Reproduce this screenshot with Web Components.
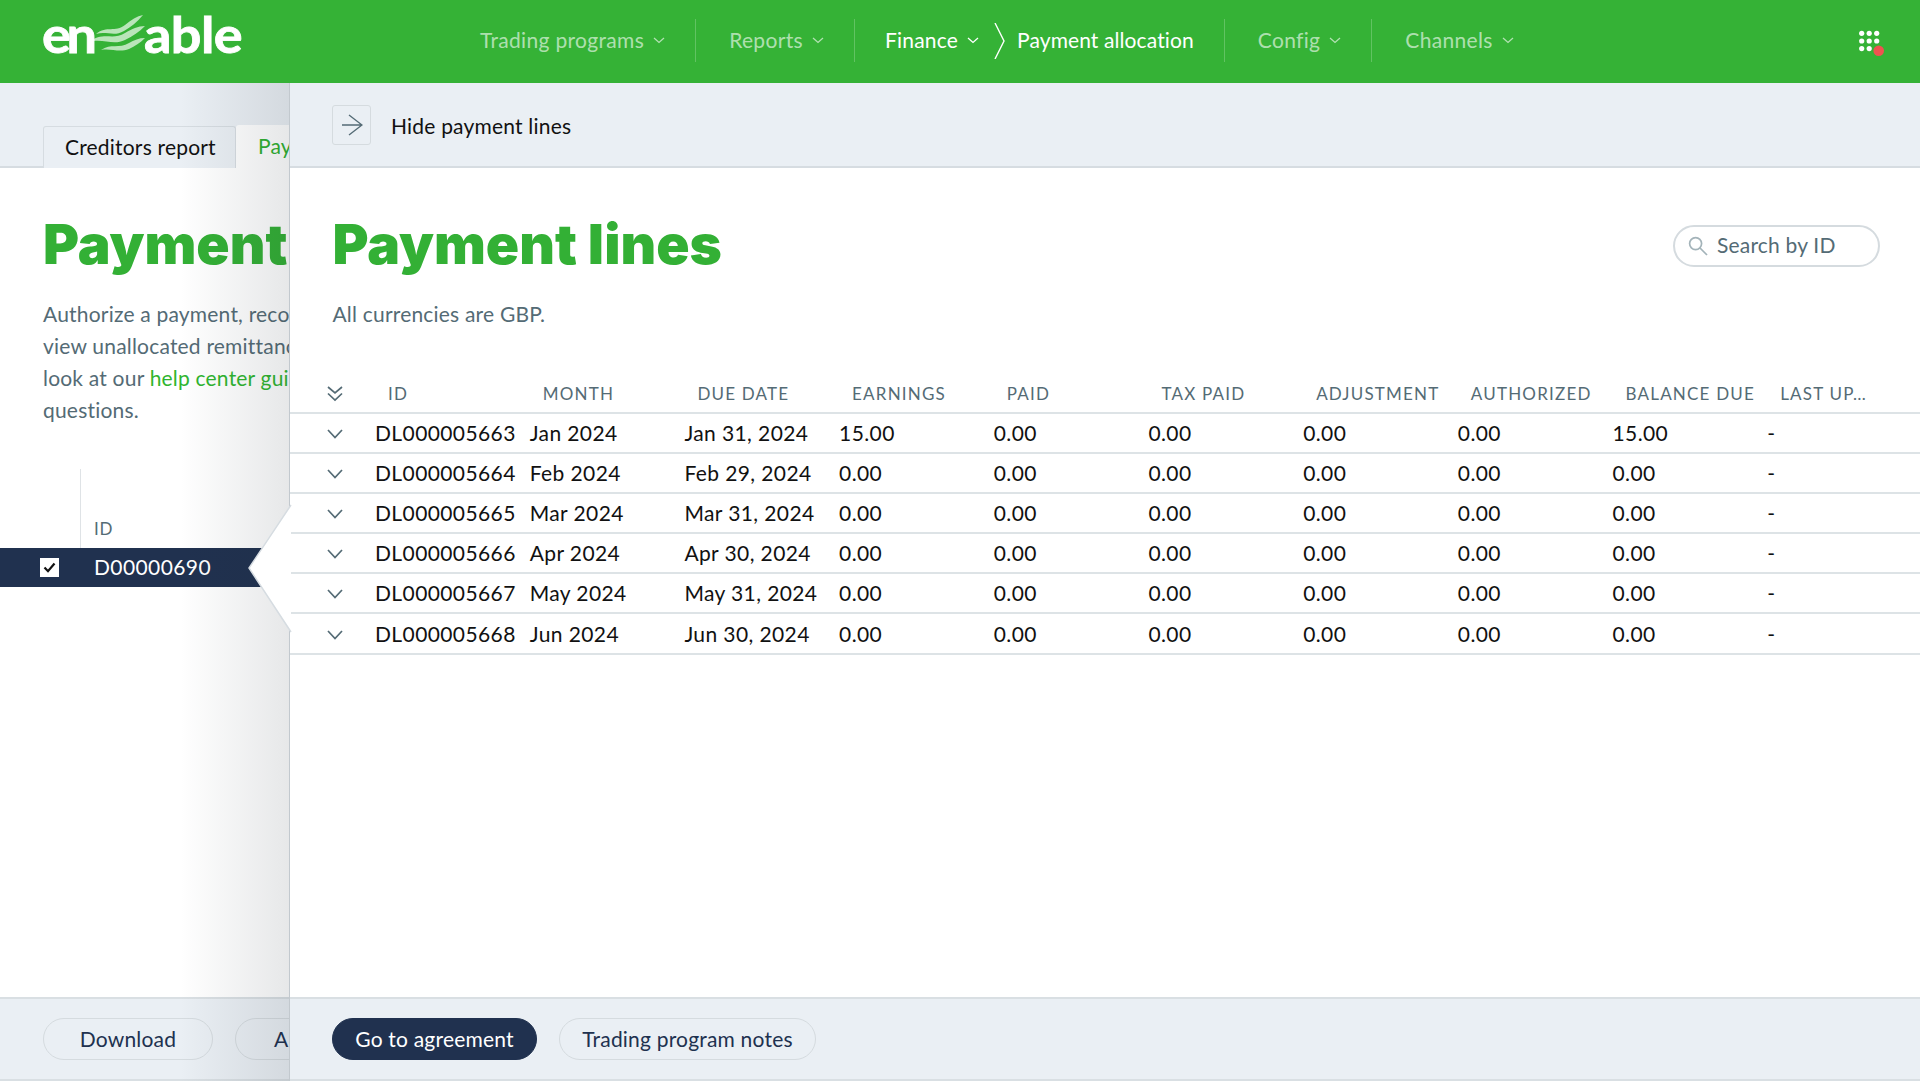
<!DOCTYPE html>
<html lang="en"><head><meta charset="utf-8"><title>Payment lines</title>
<style>
html,body{margin:0;padding:0;background:#fff}
body{font-family:Lato,"Liberation Sans",sans-serif;font-size:21px;letter-spacing:.2px;color:#111}
</style></head><body>
<en-app>
  <en-header slot="header"></en-header>
  <en-page></en-page>
  <en-panel></en-panel>
</en-app>
<script>
const define=(name,css,html)=>{
  customElements.define(name,class extends HTMLElement{
    connectedCallback(){
      if(this.shadowRoot)return;
      const r=this.attachShadow({mode:'open'});
      const h=typeof html==='function'?html(this):html;
      r.innerHTML=`<style>${css}</style>${h}`;
    }
  });
};
const chev=(w,h,c,sw)=>`<svg width="${w}" height="${h}" viewBox="0 0 ${w} ${h}" fill="none" stroke="${c}" stroke-width="${sw}"><path d="M1 1 L${w/2} ${h-1.5} L${w-1} 1"/></svg>`;

define('en-app',`:host{display:block;position:relative;width:1920px;height:1082px;overflow:hidden;background:#fff}
.wrap{display:flex;flex-direction:column;height:1081px}
.main{flex:1;position:relative;min-height:0;display:flex}
`,`<div class="wrap"><slot name="header"></slot><div class="main"><slot></slot></div></div>`);

define('en-logo',`:host{display:flex;align-items:flex-end;height:37px;margin-top:-14px;color:#fff;font:700 50px/37px Lato,sans-serif;position:relative;width:198px;-webkit-text-stroke:.8px #fff;flex:none}
.t{display:block;line-height:37px;height:37px;letter-spacing:-.5px;transform:scaleX(1.08);transform-origin:0 50%}
.en{width:45px;letter-spacing:-4px;margin-left:-1px}
svg{position:absolute;left:44px;top:-5px}
.able{margin-left:57px}`,
`<span class="t en">en</span><svg width="60" height="42" viewBox="0 0 60 42" fill="#fff" fill-opacity=".66"><path d="M9 23C20 14 28 22 38 14C44 9 50 5 56 4C50 11 44 16 37 20C27 26 20 20 9 23Z"/><path d="M2 31C16 20 26 30 38 22C45 18 51 15 58 15C52 21 46 25 38 29C26 35 16 27 2 31Z"/><path d="M14 39C24 32 32 38 42 32C47 29 52 27 58 27C53 32 48 35 42 38C32 42 24 37 14 39Z"/></svg><span class="t able">able</span>`);

define('en-nav-item',`:host{display:flex;align-items:center;height:43px;padding:0 30px 0 33px;border-right:1px solid rgba(255,255,255,.22);color:rgba(255,255,255,.62);font-size:21px;letter-spacing:.33px;white-space:nowrap}
:host([last]){border-right:0}
:host([active]){color:#fff;padding-left:30px;letter-spacing:.2px}
span,b{margin-top:-3px}
svg{margin-left:9px;margin-top:-1px}
svg.sep{margin:0 12px 0 15px}
b{font-weight:400;color:#fff;letter-spacing:.1px}`,
el=>`<span>${el.getAttribute('label')}</span>${el.hasAttribute('nochev')?'':chev(12,7,'currentColor',1.3)}${el.hasAttribute('crumb')?`<svg class="sep" width="11" height="36" viewBox="0 0 11 36" fill="none" stroke="#fff" stroke-width="1.4"><path d="M1 0L10 18L1 36"/></svg><b>${el.getAttribute('crumb')}</b>`:''}`);

define('en-header',`:host{display:flex;align-items:center;height:83px;background:#35b236;padding:0 30px 0 43px;box-sizing:border-box;flex:none}
nav{display:flex;align-items:center;margin:0 0 2px 206px;flex:1}
.apps{position:relative;width:36px;height:36px;flex:none}
svg{display:block}`,
`<en-logo></en-logo><nav>
<en-nav-item label="Trading programs"></en-nav-item>
<en-nav-item label="Reports"></en-nav-item>
<en-nav-item label="Finance" active crumb="Payment allocation"></en-nav-item>
<en-nav-item label="Config"></en-nav-item>
<en-nav-item label="Channels" last></en-nav-item>
</nav><div class="apps"><svg width="36" height="36" viewBox="0 0 36 36" fill="#fff"><circle cx="7.7" cy="9.3" r="2.6"/><circle cx="15.2" cy="9.3" r="2.6"/><circle cx="22.7" cy="9.3" r="2.6"/><circle cx="7.7" cy="17" r="2.6"/><circle cx="15.2" cy="17" r="2.6"/><circle cx="22.7" cy="17" r="2.6"/><circle cx="7.7" cy="24.6" r="2.6"/><circle cx="15.2" cy="24.6" r="2.6"/><circle cx="24.7" cy="26.7" r="5.3" fill="#ef5350"/></svg></div>`);

define('en-bar',`:host{display:flex;box-sizing:border-box;flex:none;background:#eaeff4;padding-left:43px}
:host([kind=top]){height:85px;border-bottom:2px solid #d6dce1;align-items:flex-end}
:host([kind=foot]){height:84px;border-top:2px solid #d9dfe3;border-bottom:2px solid #d9dfe3;align-items:center;gap:22px}
:host([kind=head]){height:85px;border-bottom:2px solid #d6dce1;align-items:center;padding-left:42px}
::slotted(*){flex:none}`,`<slot></slot>`);

define('en-tab',`:host{display:block;box-sizing:border-box;width:193px;height:42px;padding:0 0 0 21px;line-height:40px;font-size:21px;white-space:nowrap;margin-bottom:-2px;color:#111;background:#eaeff4;border:1.5px solid #d6dce1;border-bottom:0;border-radius:3px 3px 0 0}
:host([active]){color:#2fb031;background:#fff;border:0;height:43px;line-height:42px;width:auto;padding:0 22px}`,`<slot></slot>`);

define('en-button',`:host{display:inline-flex;align-items:center;justify-content:center;box-sizing:border-box;height:42px;border:1.5px solid #d5dbdf;border-radius:21px;color:#20314f;font-size:21px;white-space:nowrap;padding:0 0 2px}
:host([primary]){background:#20314f;border-color:#20314f;color:#fff}
:host([start]){justify-content:flex-start;padding-left:38px}`,`<slot></slot>`);

define('en-title',`:host{display:block;font:900 55px/66px Inter,Roboto,Lato,sans-serif;letter-spacing:0;color:#33b035;white-space:nowrap;height:66px;margin:-4px 0 4px}`,`<slot></slot>`);
define('en-text',`:host{display:block;font-size:21px;line-height:32px;color:#546b75;white-space:nowrap}
::slotted(a){color:#2fb52f;text-decoration:none}`,`<slot></slot>`);

define('en-check',`:host{display:block;width:19px;height:19px;background:#fff;flex:none}svg{display:block}`,
`<svg width="19" height="19" viewBox="0 0 19 19" fill="none" stroke="#111" stroke-width="2.2"><path d="M4.5 9.5L8 13.2L14.5 5.5"/></svg>`);

define('en-page',`:host{display:flex;flex-direction:column;width:100%;height:100%;overflow:hidden}
.body{flex:1;min-height:0;padding-top:47px;overflow:hidden}
.copy{padding-left:43px}
en-text{margin-top:21px}
.list{margin-top:43px}
.lh{height:79px;box-sizing:border-box;margin-left:80px;border-left:1.5px solid #dfe3e6;padding:50px 0 0 13px;font-size:17px;letter-spacing:.8px;color:#546b75;line-height:20px}
.row{height:39px;background:#20314f;color:#fff;display:flex;align-items:center;padding-left:40px;gap:35px;font-size:21px;letter-spacing:.4px;box-sizing:border-box}
.row span{margin-top:-2px}
a{color:#2fb52f;text-decoration:none}
`,`<en-bar kind="top"><en-tab>Creditors report</en-tab><en-tab active>Payment allocation</en-tab></en-bar>
<div class="body"><div class="copy"><en-title>Payment</en-title>
<en-text>Authorize a payment, record a<br>view unallocated remittance<br>look at our <a href="#">help center guide</a><br>questions.</en-text></div>
<div class="list"><div class="lh">ID</div><div class="row"><en-check></en-check><span>D00000690</span></div></div></div>
<en-bar kind="foot"><en-button style="width:170px">Download</en-button><en-button start style="width:170px">Allocate</en-button></en-bar>`);

define('en-search',`:host{display:flex;align-items:center;box-sizing:border-box;width:207px;height:42px;border:2px solid #d5dbdf;border-radius:21px;padding-left:13px;gap:9px;color:#546b75;font-size:21px;flex:none;white-space:nowrap}svg{display:block;flex:none}span{margin-top:-3px}`,
`<svg width="20" height="20" viewBox="0 0 20 20" fill="none" stroke="#a3b3b9" stroke-width="1.7"><circle cx="7.6" cy="7.6" r="6"/><path d="M12 12L19 19"/></svg><span>Search by ID</span>`);

const COLS='85px repeat(9,154.7px) 1fr';
define('en-row',`:host{display:grid;grid-template-columns:${COLS};height:40.1px;box-sizing:border-box;border-bottom:2px solid #dde3e6;align-items:center;font-size:21px;letter-spacing:.4px;color:#111;white-space:nowrap}
.c{padding:2px 0 0 37px;display:flex}svg{display:block}span{display:block;overflow:visible;line-height:38px}`,
el=>{
 const v=el.getAttribute('values').split('|');
 return `<div class="c">${chev(16,10,'#546b75',1.7)}</div>`+v.map(x=>`<span>${x}</span>`).join('');
});
define('en-thead',`:host{display:grid;grid-template-columns:${COLS};height:40px;box-sizing:border-box;border-bottom:2px solid #dde3e6;align-items:center;font-size:17px;letter-spacing:1.2px;color:#546b75;white-space:nowrap}
.c{padding:1px 0 0 37px}svg{display:block}span{padding-left:13px;line-height:38px;margin-top:1px}`,
`<div class="c"><svg width="16" height="16" viewBox="0 0 16 16" fill="none" stroke="#546b75" stroke-width="1.7"><path d="M1 1L8 7L15 1M1 7.5L8 14L15 7.5"/></svg></div>`+
['ID','MONTH','DUE DATE','EARNINGS','PAID','TAX PAID','ADJUSTMENT','AUTHORIZED','BALANCE DUE','LAST UP…'].map(x=>`<span>${x}</span>`).join(''));

const rows=[['DL000005663','Jan 2024','Jan 31, 2024','15.00','15.00'],['DL000005664','Feb 2024','Feb 29, 2024','0.00','0.00'],['DL000005665','Mar 2024','Mar 31, 2024','0.00','0.00'],['DL000005666','Apr 2024','Apr 30, 2024','0.00','0.00'],['DL000005667','May 2024','May 31, 2024','0.00','0.00'],['DL000005668','Jun 2024','Jun 30, 2024','0.00','0.00']];

define('en-panel',`:host{position:absolute;left:289px;top:0;right:0;bottom:0;display:flex;flex-direction:column;background:#fff;border-left:1.5px solid #d6dce1;box-sizing:border-box}
.shade{position:absolute;right:100%;top:0;bottom:0;width:110px;pointer-events:none;background:linear-gradient(90deg,rgba(30,40,50,0),rgba(30,40,50,.11))}
.ptr{position:absolute;left:-41px;top:422px;overflow:visible}
.toggle{display:flex;align-items:center;justify-content:center;box-sizing:border-box;width:39px;height:40px;border:1.5px solid #d5dbdf;border-radius:3px}
.lbl{margin:2px 0 0 20px;color:#111}
.body{flex:1;min-height:0}
.top{display:flex;justify-content:space-between;padding:47px 40px 0 42.5px}
.top en-search{margin-top:10px}
en-text{margin:17px 0 0 42.5px}
.tbl{margin-top:44px}
en-bar[kind=foot]{padding-left:42px}
svg{display:block}`,
`<div class="shade"></div>
<svg class="ptr" width="42" height="128" viewBox="0 0 42 128"><path d="M42 0L0 63L42 127Z" fill="#fff"/><path d="M42 0L0 63L42 127" fill="none" stroke="#d6dce1" stroke-width="1.5"/></svg>
<en-bar kind="head"><div class="toggle"><svg width="22" height="22" viewBox="0 0 22 22" fill="none" stroke="#546b75" stroke-width="1.4"><path d="M1 11H21M8 1L21 11L8 21"/></svg></div><span class="lbl">Hide payment lines</span></en-bar>
<div class="body"><div class="top"><en-title>Payment lines</en-title><en-search></en-search></div>
<en-text>All currencies are GBP.</en-text>
<div class="tbl"><en-thead></en-thead>${rows.map(r=>`<en-row values="${r[0]}|${r[1]}|${r[2]}|${r[3]}|0.00|0.00|0.00|0.00|${r[4]}|-"></en-row>`).join('')}</div></div>
<en-bar kind="foot"><en-button primary style="width:205px">Go to agreement</en-button><en-button style="width:257px">Trading program notes</en-button></en-bar>`);
</script>
</body></html>
